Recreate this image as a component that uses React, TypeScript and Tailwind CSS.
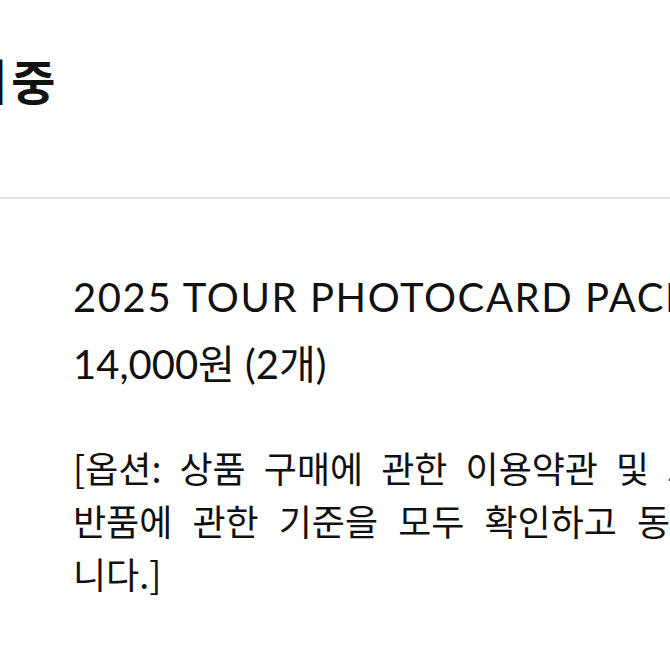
import React from "react";

const latin = {
  fontFamily: '"Lato", "Noto Sans CJK KR", sans-serif',
};

const korean = {
  fontFamily: '"Noto Sans CJK KR", sans-serif',
};

export default function App() {
  return (
    <div className="w-[670px] h-[670px] overflow-hidden bg-white text-[#111]">
      {/* status header */}
      <div className="h-[197px] flex flex-col">
        <div
          className="pt-[44px] ml-[-87px] whitespace-nowrap text-[48px] font-bold leading-[70px] tracking-[5px]"
          style={korean}
        >
          거래중
        </div>
      </div>
      <div className="h-[2px] bg-[#e2e2e2]" />

      {/* order item */}
      <div className="pl-[73px] pt-[70px] flex flex-col whitespace-nowrap">
        <div className="text-[40px] leading-[56px] tracking-[1.6px]" style={latin}>
          2025 TOUR PHOTOCARD PACK
        </div>
        <div className="mt-[11px] text-[40px] leading-[56px]" style={latin}>
          14,000원 (2개)
        </div>
        <div
          className="mt-[49px] text-[36px] leading-[53px] [word-spacing:10px]"
          style={korean}
        >
          <div>[옵션: 상품 구매에 관한 이용약관 및 교환/</div>
          <div className="[word-spacing:12px]">반품에 관한 기준을 모두 확인하고 동의합</div>
          <div>니다.]</div>
        </div>
      </div>
    </div>
  );
}
